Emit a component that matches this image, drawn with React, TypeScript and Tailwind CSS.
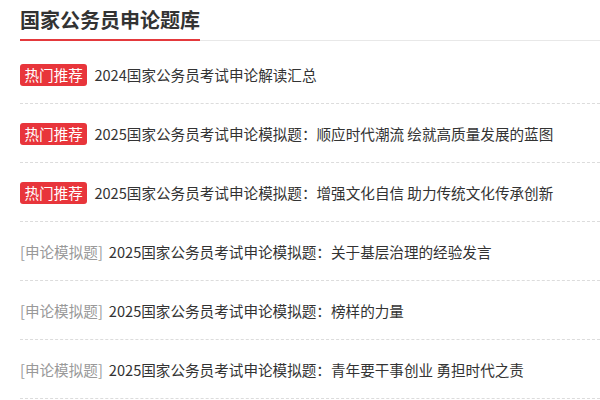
import React from "react";

type Item = {
  tag: string;
  hot: boolean;
  title: string;
};

const items: Item[] = [
  { tag: "热门推荐", hot: true, title: "2024国家公务员考试申论解读汇总" },
  {
    tag: "热门推荐",
    hot: true,
    title: "2025国家公务员考试申论模拟题：顺应时代潮流 绘就高质量发展的蓝图",
  },
  {
    tag: "热门推荐",
    hot: true,
    title: "2025国家公务员考试申论模拟题：增强文化自信 助力传统文化传承创新",
  },
  {
    tag: "[申论模拟题]",
    hot: false,
    title: "2025国家公务员考试申论模拟题：关于基层治理的经验发言",
  },
  {
    tag: "[申论模拟题]",
    hot: false,
    title: "2025国家公务员考试申论模拟题：榜样的力量",
  },
  {
    tag: "[申论模拟题]",
    hot: false,
    title: "2025国家公务员考试申论模拟题：青年要干事创业 勇担时代之责",
  },
];

export default function App() {
  return (
    <div
      className="w-[600px] h-[400px] overflow-hidden bg-white pl-[20px]"
      style={{ fontFamily: '"Noto Sans CJK SC", "Noto Sans", sans-serif' }}
    >
      <div className="flex border-b border-[#e8e8e8]">
        <h2 className="text-[20px] font-bold leading-[28px] text-[#333] pt-[6px] pb-[5px] border-b-2 border-[#e4393c] -mb-px">
          国家公务员申论题库
        </h2>
      </div>

      <ul className="mt-[4px]">
        {items.map((item, i) => (
          <li
            key={i}
            className="h-[59px] pt-[2px] flex items-center border-b border-dashed border-[#dcdcdc] text-[14.6px] whitespace-nowrap"
          >
            {item.hot ? (
              <span className="bg-[#e8353b] text-white rounded-[3px] px-[4.5px] h-[22px] leading-[22px] mr-[7px]">
                {item.tag}
              </span>
            ) : (
              <span className="text-[#999] mr-[6px]">{item.tag}</span>
            )}
            <a href="#" className="text-[#333]">
              {item.title}
            </a>
          </li>
        ))}
      </ul>
    </div>
  );
}
